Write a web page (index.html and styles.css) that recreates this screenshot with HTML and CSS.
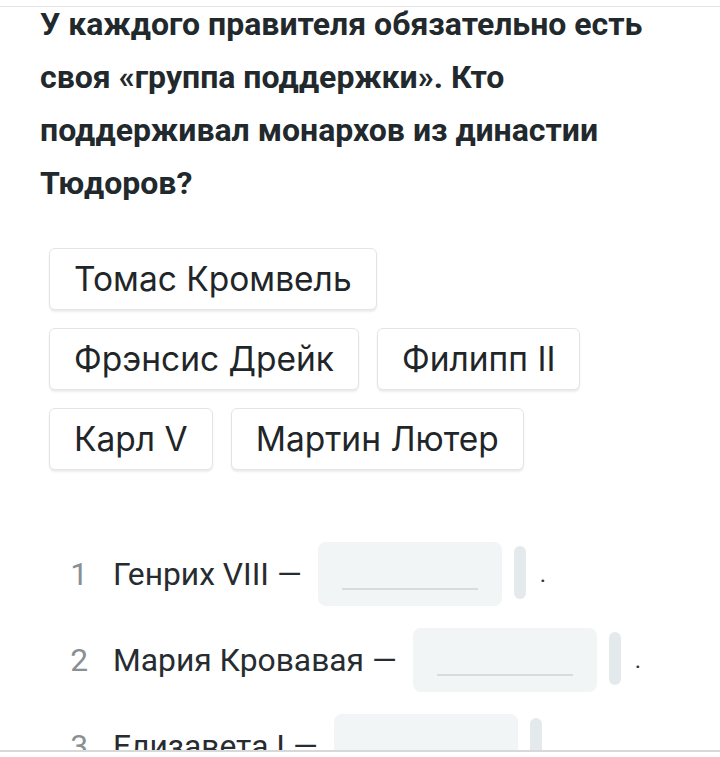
FILE: index.html
```html
<!DOCTYPE html>
<html lang="ru">
<head>
    <meta charset="UTF-8">
    <meta name="viewport" content="width=device-width, initial-scale=1.0">
    <title>Тюдоры</title>
    <link rel="stylesheet" href="styles.css">
</head>
<body>
    <div class="frame">
        <div class="task">
            <h1 class="question">У каждого правителя обязательно есть своя «группа поддержки». Кто поддерживал монархов из династии Тюдоров?</h1>

            <div class="chips">
                <div class="chip">Томас Кромвель</div>
                <div class="chip">Фрэнсис Дрейк</div>
                <div class="chip">Филипп II</div>
                <div class="chip">Карл V</div>
                <div class="chip">Мартин Лютер</div>
            </div>

            <ol class="answers">
                <li class="answer">
                    <span class="num">1</span>
                    <span class="label">Генрих VIII —</span>
                    <span class="slot"><span class="slot-line"></span></span>
                    <span class="handle"></span>
                    <span class="dot">.</span>
                </li>
                <li class="answer">
                    <span class="num">2</span>
                    <span class="label">Мария Кровавая —</span>
                    <span class="slot"><span class="slot-line"></span></span>
                    <span class="handle"></span>
                    <span class="dot">.</span>
                </li>
                <li class="answer">
                    <span class="num">3</span>
                    <span class="label">Елизавета I —</span>
                    <span class="slot"><span class="slot-line"></span></span>
                    <span class="handle"></span>
                    <span class="dot">.</span>
                </li>
            </ol>
        </div>
    </div>
</body>
</html>
```

FILE: styles.css
```css
* {
    margin: 0;
    padding: 0;
    box-sizing: border-box;
}

body {
    font-family: Roboto, "Liberation Sans", sans-serif;
    background: white;
    color: #232a2e;
    padding-top: 6px;
}

.frame {
    height: 746px;
    border-top: 1px solid #e4e4e4;
    border-bottom: 2px solid #d8d8d8;
    overflow: hidden;
}

.task {
    padding: 0 40px;
}

.question {
    margin-top: -9px;
    font-size: 32px;
    font-weight: 700;
    line-height: 53px;
    color: #22292d;
}

.chips {
    display: flex;
    flex-wrap: wrap;
    gap: 18px;
    margin-top: 38px;
    padding-left: 9px;
}

.chip {
    height: 62px;
    padding: 0 24px;
    display: flex;
    align-items: center;
    font-family: Inter, "Noto Sans", sans-serif;
    font-size: 33.5px;
    color: #1f2629;
    background: white;
    border: 1px solid #e2e5e7;
    border-radius: 6px;
    box-shadow: 0 2px 2px rgba(0,0,0,0.08);
}

.answers {
    list-style: none;
    margin-top: 72px;
    display: flex;
    flex-direction: column;
    gap: 22px;
}

.answer {
    display: flex;
    align-items: center;
    font-size: 31.8px;
    height: 64px;
}

.num {
    width: 48px;
    text-align: right;
    color: #8a8f92;
    margin-right: 25px;
}

.label {
    color: #262c30;
}

.slot {
    width: 184px;
    height: 64px;
    margin-left: 16px;
    background: #f1f5f6;
    border-radius: 8px;
    display: flex;
    align-items: flex-end;
    padding: 0 24px 16px;
}

.slot-line {
    display: block;
    width: 100%;
    height: 2px;
    background: #d6dcdf;
}

.handle {
    width: 12px;
    height: 53px;
    margin-left: 12px;
    margin-top: -3px;
    background: #e4e9eb;
    border-radius: 6px;
}

.dot {
    margin-left: 14px;
    font-size: 24px;
    color: #333;
}
```
